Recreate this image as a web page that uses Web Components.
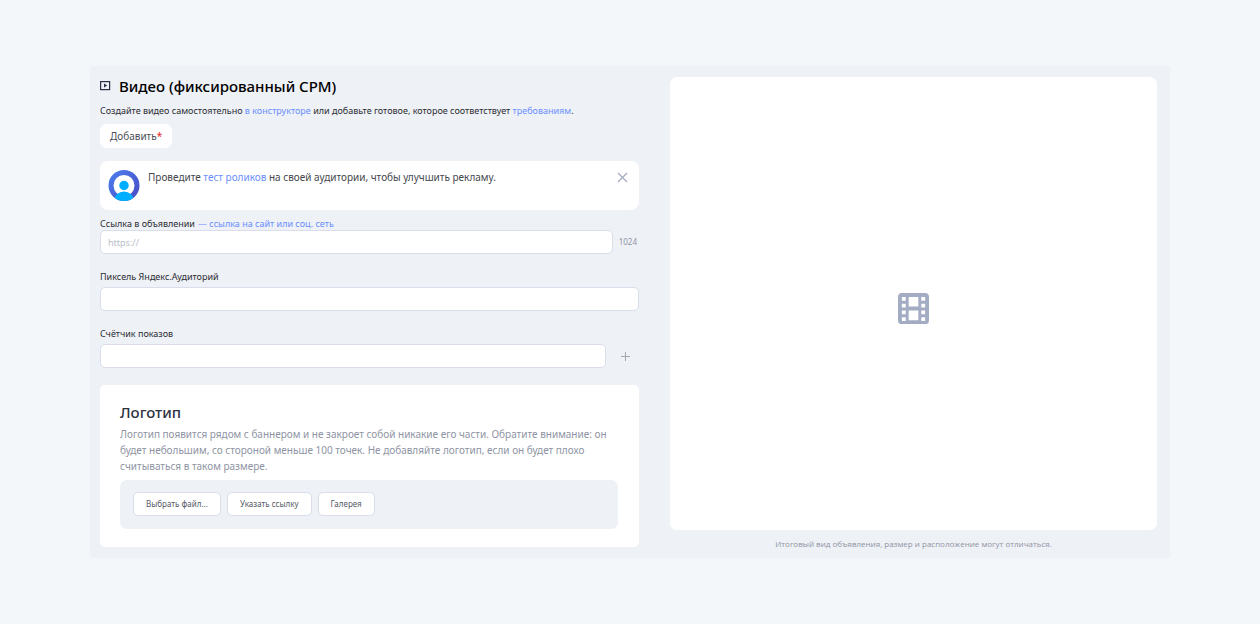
<!DOCTYPE html>
<html lang="ru">
<head>
  <meta charset="UTF-8">
  <meta name="viewport" content="width=device-width, initial-scale=1.0">
  <title>Видео (фиксированный CPM)</title>
  <style>
    body{
        margin:0;
        background-color:#f3f7fa;
        color:#2b2d33;
        font-family:"Noto Sans","Open Sans",sans-serif;
        font-size:9px;
        line-height:14px;
        --panel:#eef1f6;
        --link:#6b8fff;
        --muted:#8e94a3;
        --border:#d9deea;
    }
  </style>
</head>
<body>
  <video-ad-page></video-ad-page>

  <script>
  class TextLink extends HTMLElement {
    constructor() {
      super();
      this.attachShadow({ mode: "open" });
      /*html*/
      this.shadowRoot.innerHTML = `
        <style>
        :host{
            display:inline;
        }
        a{
            color:var(--link);
            text-decoration:none;
        }
        a:hover{
            text-decoration:underline;
        }
        </style><a href="#"><slot></slot></a>`;
    }
  }
  customElements.define('text-link',TextLink);

  class ActionButton extends HTMLElement {
    constructor() {
      super();
      this.attachShadow({ mode: "open" });
      /*html*/
      this.shadowRoot.innerHTML = `
        <style>
        :host{
            display:inline-flex;
        }
        button{
            height:24px;
            padding:0 12px;
            background-color:#fff;
            border:1px solid var(--border);
            border-radius:5px;
            color:#555a66;
            font:inherit;
            font-size:8px;
            cursor:pointer;
        }
        :host([plain]) button{
            padding:0 10px;
            border:none;
            border-radius:7px;
            color:#4c4f57;
            font-size:10px;
        }
        :host([required]) button::after{
            content:"*";
            color:#e22;
        }
        </style>
        <button type="button"><slot></slot></button>
        `;
    }
  }
  customElements.define('action-button',ActionButton);

  class TextField extends HTMLElement {
    constructor() {
      super();
      this.attachShadow({ mode: "open" });
      /*html*/
      this.shadowRoot.innerHTML = `
        <style>
        :host{
            display:block;
        }
        .caption{
            display:flex;
            gap:3px;
            margin-bottom:4px;
            line-height:13px;
        }
        :host([compact]) .caption{
            margin-bottom:0;
        }
        .row{
            display:flex;
            align-items:center;
        }
        input{
            box-sizing:border-box;
            flex:1;
            min-width:0;
            height:24px;
            padding:0 7px;
            background-color:#fff;
            border:1px solid var(--border);
            border-radius:5px;
            font:inherit;
        }
        input::placeholder{
            color:#b8bdc9;
            opacity:1;
        }
        </style>
        <div class="caption">
            <label for="input"></label>
            <slot name="hint"></slot>
        </div>
        <div class="row">
            <input id="input" type="text">
            <slot name="after"></slot>
        </div>
        `;
    }
    static get observedAttributes() {
        return ['label','placeholder'];
    }
    attributeChangedCallback(attrName,oldVal,newVal) {
        if(attrName === 'label')
        {
            this.shadowRoot.querySelector('label').textContent = newVal;
        }
        if(attrName === 'placeholder')
        {
            this.shadowRoot.querySelector('input').placeholder = newVal;
        }
    }
  }
  customElements.define('text-field',TextField);

  class TipNotice extends HTMLElement {
    constructor() {
      super();
      this.attachShadow({ mode: "open" });
      /*html*/
      this.shadowRoot.innerHTML = `
        <style>
        :host{
            display:flex;
            align-items:flex-start;
            gap:7px;
            padding:8px 10px 8px 8px;
            background-color:#fff;
            border-radius:8px;
            color:#45474d;
            font-size:10px;
            line-height:16px;
        }
        svg{
            display:block;
        }
        p{
            flex:1;
            margin:0;
        }
        button{
            display:flex;
            padding:2px 0;
            background:none;
            border:none;
            cursor:pointer;
        }
        </style>
        <svg width="33" height="33" viewBox="0 0 33 33" aria-hidden="true">
            <defs>
                <linearGradient id="ring" x1="0" y1="0" x2="1" y2="1">
                    <stop offset="0" stop-color="#4a80f0"/>
                    <stop offset="1" stop-color="#4a48c0"/>
                </linearGradient>
                <clipPath id="round"><circle cx="16" cy="16.5" r="15.5"/></clipPath>
            </defs>
            <circle cx="16" cy="16.5" r="15.5" fill="url(#ring)"/>
            <circle cx="16" cy="16.5" r="10.5" fill="#fff"/>
            <circle cx="16" cy="16.5" r="4.7" fill="#00aeff"/>
            <ellipse cx="16" cy="31.5" rx="10" ry="9" fill="#00aeff" clip-path="url(#round)"/>
        </svg>
        <p><slot></slot></p>
        <button type="button" aria-label="Закрыть">
            <svg width="13" height="13" viewBox="0 0 13 13" fill="none" stroke="#a4abc0" stroke-width="1.3">
                <path d="M2 2l9 9M11 2l-9 9"/>
            </svg>
        </button>
        `;
    }
  }
  customElements.define('tip-notice',TipNotice);

  class LogoCard extends HTMLElement {
    constructor() {
      super();
      this.attachShadow({ mode: "open" });
      /*html*/
      this.shadowRoot.innerHTML = `
        <style>
        :host{
            display:block;
            padding:17px 21px 18px 20px;
            background-color:#fff;
            border-radius:5px;
        }
        h2{
            margin:0 0 4px;
            color:#2d323f;
            font-size:15px;
            font-weight:500;
            line-height:20px;
        }
        p{
            margin:0 0 6px;
            color:var(--muted);
            font-size:10px;
            line-height:16px;
        }
        .tray{
            display:flex;
            flex-wrap:wrap;
            gap:6px;
            padding:12px 13px 13px;
            background-color:var(--panel);
            border-radius:7px;
        }
        </style>
        <h2>Логотип</h2>
        <p><slot></slot></p>
        <div class="tray"><slot name="action"></slot></div>
        `;
    }
  }
  customElements.define('logo-card',LogoCard);

  class AdPreview extends HTMLElement {
    constructor() {
      super();
      this.attachShadow({ mode: "open" });
      /*html*/
      this.shadowRoot.innerHTML = `
        <style>
        :host{
            display:flex;
            flex-direction:column;
            gap:7px;
        }
        .screen{
            flex:1;
            display:flex;
            justify-content:center;
            align-items:center;
            padding-top:10px;
            background-color:#fff;
            border-radius:7px;
        }
        .note{
            color:var(--muted);
            font-family:"Open Sans","Noto Sans",sans-serif;
            font-size:8px;
            text-align:center;
        }
        </style>
        <div class="screen">
            <svg width="31" height="31" viewBox="0 0 32 32" aria-hidden="true">
                <path fill="#a3acc2" fill-rule="evenodd" d="M4 0h24a4 4 0 0 1 4 4v24a4 4 0 0 1-4 4H4a4 4 0 0 1-4-4V4a4 4 0 0 1 4-4z
                    M11 4v10h10V4z M11 18v10h10V18z
                    M4 4v4h4V4z M4 11v4h4v-4z M4 18v4h4v-4z M4 25v4h4v-4z
                    M24 4v4h4V4z M24 11v4h4v-4z M24 18v4h4v-4z M24 25v4h4v-4z"/>
            </svg>
        </div>
        <div class="note"><slot></slot></div>
        `;
    }
  }
  customElements.define('ad-preview',AdPreview);

  class VideoAdPage extends HTMLElement {
    constructor() {
      super();
      this.attachShadow({ mode: "open" });
      /*html*/
      this.shadowRoot.innerHTML = `
        <style>
        :host{
            display:block;
            padding:66px 90px;
        }
        main{
            display:grid;
            grid-template-columns:minmax(0,539fr) minmax(0,487fr);
            gap:31px;
            padding:11px 13px 7px 10px;
            background-color:var(--panel);
        }
        header{
            display:flex;
            align-items:center;
            gap:8px;
            margin-bottom:9px;
        }
        h1{
            margin:0;
            color:#000;
            font-size:15px;
            font-weight:500;
            line-height:18px;
        }
        .intro{
            margin:0 0 6px;
        }
        tip-notice{
            margin:13px 0 7px;
        }
        .fields{
            display:flex;
            flex-direction:column;
            gap:16px;
            margin-bottom:17px;
        }
        .limit{
            width:24px;
            padding-right:2px;
            color:var(--muted);
            font-size:8px;
            text-align:right;
        }
        .add{
            display:flex;
            justify-content:center;
            width:33px;
            padding:0 0 0 6px;
            background:none;
            border:none;
            cursor:pointer;
        }
        logo-card{
            margin-bottom:4px;
        }
        /*Media queries*/
        @media only screen and (max-width: 700px) {
            :host{
                padding:16px;
            }
            main{
                grid-template-columns:1fr;
            }
            ad-preview{
                min-height:300px;
            }
        }
        </style>
        <main>
            <section>
                <header>
                    <svg width="11" height="12" viewBox="0 0 11 12" aria-hidden="true">
                        <rect x="0.6" y="1.6" width="9" height="8" fill="none" stroke="#2c3145" stroke-width="1.2"/>
                        <path d="M4 3.6l3.2 2-3.2 2z" fill="#2c3145"/>
                    </svg>
                    <h1>Видео (фиксированный CPM)</h1>
                </header>
                <p class="intro">Создайте видео самостоятельно <text-link>в конструкторе</text-link> или добавьте готовое, которое соответствует <text-link>требованиям</text-link>.</p>
                <action-button plain required>Добавить</action-button>
                <tip-notice>Проведите <text-link>тест роликов</text-link> на своей аудитории, чтобы улучшить рекламу.</tip-notice>
                <div class="fields">
                    <text-field compact label="Ссылка в объявлении" placeholder="https://">
                        <text-link slot="hint">— ссылка на сайт или соц. сеть</text-link>
                        <span slot="after" class="limit">1024</span>
                    </text-field>
                    <text-field label="Пиксель Яндекс.Аудиторий"></text-field>
                    <text-field label="Счётчик показов">
                        <button slot="after" class="add" type="button" aria-label="Добавить счётчик">
                            <svg width="11" height="11" viewBox="0 0 11 11" stroke="#a4a9b0">
                                <path d="M5.5 1v9M1 5.5h9"/>
                            </svg>
                        </button>
                    </text-field>
                </div>
                <logo-card>
                    Логотип появится рядом с баннером и не закроет собой никакие его части. Обратите внимание: он будет небольшим, со стороной меньше 100 точек. Не добавляйте логотип, если он будет плохо считываться в таком размере.
                    <action-button slot="action">Выбрать файл...</action-button>
                    <action-button slot="action">Указать ссылку</action-button>
                    <action-button slot="action">Галерея</action-button>
                </logo-card>
            </section>
            <ad-preview>Итоговый вид объявления, размер и расположение могут отличаться.</ad-preview>
        </main>
        `;
    }
  }
  customElements.define('video-ad-page',VideoAdPage);
  </script>
</body>
</html>
